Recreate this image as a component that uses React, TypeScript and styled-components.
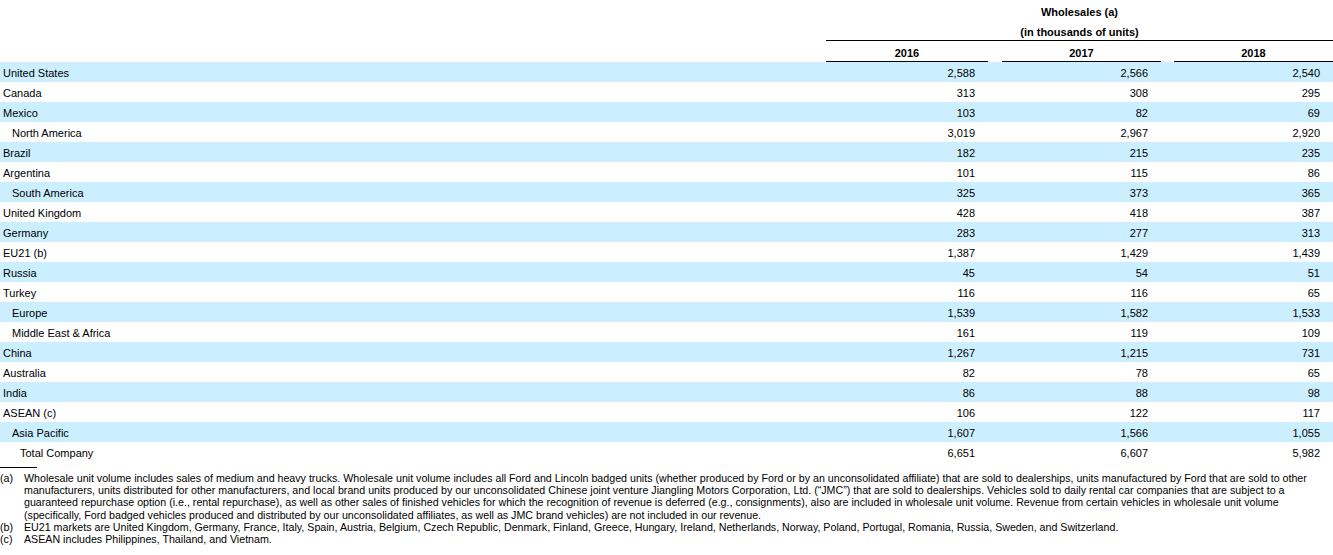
import styled, { createGlobalStyle } from "styled-components";

const GlobalStyle = createGlobalStyle`
  body {
    margin: 0;
    background: #ffffff;
    color: #000000;
    font-family: "Liberation Sans", Arial, sans-serif;
  }
`;

interface RowData {
  label: string;
  indent: number;
  values: string[];
}

const rows: RowData[] = [
  { label: "United States", indent: 0, values: ["2,588", "2,566", "2,540"] },
  { label: "Canada", indent: 0, values: ["313", "308", "295"] },
  { label: "Mexico", indent: 0, values: ["103", "82", "69"] },
  { label: "North America", indent: 1, values: ["3,019", "2,967", "2,920"] },
  { label: "Brazil", indent: 0, values: ["182", "215", "235"] },
  { label: "Argentina", indent: 0, values: ["101", "115", "86"] },
  { label: "South America", indent: 1, values: ["325", "373", "365"] },
  { label: "United Kingdom", indent: 0, values: ["428", "418", "387"] },
  { label: "Germany", indent: 0, values: ["283", "277", "313"] },
  { label: "EU21 (b)", indent: 0, values: ["1,387", "1,429", "1,439"] },
  { label: "Russia", indent: 0, values: ["45", "54", "51"] },
  { label: "Turkey", indent: 0, values: ["116", "116", "65"] },
  { label: "Europe", indent: 1, values: ["1,539", "1,582", "1,533"] },
  { label: "Middle East & Africa", indent: 1, values: ["161", "119", "109"] },
  { label: "China", indent: 0, values: ["1,267", "1,215", "731"] },
  { label: "Australia", indent: 0, values: ["82", "78", "65"] },
  { label: "India", indent: 0, values: ["86", "88", "98"] },
  { label: "ASEAN (c)", indent: 0, values: ["106", "122", "117"] },
  { label: "Asia Pacific", indent: 1, values: ["1,607", "1,566", "1,055"] },
  { label: "Total Company", indent: 2, values: ["6,651", "6,607", "5,982"] },
];

const years = ["2016", "2017", "2018"];
const indents = [3, 12, 20];

const Page = styled.div`
  width: 1333px;
  font-size: 11px;
`;

// label column + three year columns separated by small gaps
const Grid = styled.div`
  display: grid;
  grid-template-columns: 826px 162px 14px 159px 13px 159px;
`;

const HeadBlock = styled.div`
  grid-column: 2 / 7;
  height: 38px;
  text-align: center;
  font-weight: bold;
  padding-top: 2px;
  border-bottom: 1px solid #000;
`;

const HeadLine = styled.div<{ short?: boolean }>`
  height: ${(p) => (p.short ? 18 : 20)}px;
  line-height: 20px;
`;

const YearCell = styled.div<{ col: number }>`
  grid-column: ${(p) => p.col};
  text-align: center;
  font-weight: bold;
  height: 20px;
  line-height: 24px;
  border-bottom: 1px solid #000;
`;

const Row = styled.div<{ shaded: boolean }>`
  grid-column: 1 / 7;
  display: grid;
  grid-template-columns: subgrid;
  height: 20px;
  line-height: 22px;
  background: ${(p) => (p.shaded ? "#ccefff" : "#ffffff")};
`;

const Label = styled.div<{ indent: number }>`
  padding-left: ${(p) => indents[p.indent]}px;
  white-space: nowrap;
`;

const Value = styled.div<{ col: number }>`
  grid-column: ${(p) => p.col};
  text-align: right;
  padding-right: 13px;
`;

const Notes = styled.div`
  padding-top: 5px;
  font-size: 10.67px;
  line-height: 12.2px;
`;

const NoteRule = styled.div`
  width: 37px;
  border-top: 1px solid #000;
  margin-bottom: 4px;
`;

const Note = styled.div`
  display: flex;
`;

const NoteMark = styled.span`
  width: 24px;
  flex: none;
`;

const NoteText = styled.span`
  white-space: nowrap;
`;

const noteA = [
  "Wholesale unit volume includes sales of medium and heavy trucks. Wholesale unit volume includes all Ford and Lincoln badged units (whether produced by Ford or by an unconsolidated affiliate) that are sold to dealerships, units manufactured by Ford that are sold to other",
  "manufacturers, units distributed for other manufacturers, and local brand units produced by our unconsolidated Chinese joint venture Jiangling Motors Corporation, Ltd. (\u201cJMC\u201d) that are sold to dealerships. Vehicles sold to daily rental car companies that are subject to a",
  "guaranteed repurchase option (i.e., rental repurchase), as well as other sales of finished vehicles for which the recognition of revenue is deferred (e.g., consignments), also are included in wholesale unit volume. Revenue from certain vehicles in wholesale unit volume",
  "(specifically, Ford badged vehicles produced and distributed by our unconsolidated affiliates, as well as JMC brand vehicles) are not included in our revenue.",
];

export default function App() {
  return (
    <Page>
      <GlobalStyle />
      <Grid>
        <HeadBlock>
          <HeadLine>Wholesales (a)</HeadLine>
          <HeadLine short>(in thousands of units)</HeadLine>
        </HeadBlock>
        {years.map((y, i) => (
          <YearCell key={y} col={2 + i * 2}>
            {y}
          </YearCell>
        ))}
        {rows.map((r, i) => (
          <Row key={r.label} shaded={i % 2 === 0}>
            <Label indent={r.indent}>{r.label}</Label>
            {r.values.map((v, j) => (
              <Value key={j} col={2 + j * 2}>
                {v}
              </Value>
            ))}
          </Row>
        ))}
      </Grid>
      <Notes>
        <NoteRule />
        <Note>
          <NoteMark>(a)</NoteMark>
          <NoteText>
            {noteA.map((line) => (
              <div key={line}>{line}</div>
            ))}
          </NoteText>
        </Note>
        <Note>
          <NoteMark>(b)</NoteMark>
          <NoteText>
            EU21 markets are United Kingdom, Germany, France, Italy, Spain, Austria, Belgium, Czech Republic, Denmark, Finland, Greece, Hungary, Ireland, Netherlands, Norway, Poland, Portugal, Romania, Russia, Sweden, and Switzerland.
          </NoteText>
        </Note>
        <Note>
          <NoteMark>(c)</NoteMark>
          <NoteText>ASEAN includes Philippines, Thailand, and Vietnam.</NoteText>
        </Note>
      </Notes>
    </Page>
  );
}
